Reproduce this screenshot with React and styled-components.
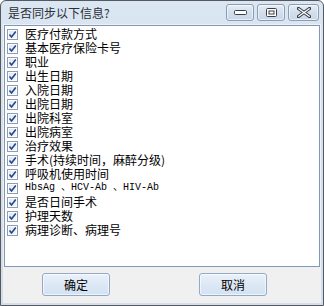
import React from 'react'
import styled, { createGlobalStyle } from 'styled-components'

const items = [
  '医疗付款方式',
  '基本医疗保险卡号',
  '职业',
  '出生日期',
  '入院日期',
  '出院日期',
  '出院科室',
  '出院病室',
  '治疗效果',
  '手术(持续时间，麻醉分级)',
  '呼吸机使用时间',
  'HbsAg 、HCV-Ab 、HIV-Ab',
  '是否日间手术',
  '护理天数',
  '病理诊断、病理号',
]

const App = () => {
  return (
    <>
      <GlobalStyle />
      <Window>
        <TitleBar>
          <Title>是否同步以下信息?</Title>
          <Controls>
            <CtrlBtn>
              <svg width="13" height="6" viewBox="0 0 13 6">
                <rect x="0.5" y="0.5" width="12" height="4" rx="1" fill="#fff" stroke="#3a3f47" />
              </svg>
            </CtrlBtn>
            <CtrlBtn>
              <svg width="11" height="9" viewBox="0 0 11 9">
                <rect x="0.5" y="0.5" width="10" height="8" rx="1" fill="#fff" stroke="#3a3f47" />
                <rect x="3" y="3" width="5" height="3" fill="none" stroke="#3a3f47" />
              </svg>
            </CtrlBtn>
            <CtrlBtn $wide>
              <svg width="14" height="11" viewBox="0 0 14 11">
                <path d="M1.5 1.5 L12.5 9.5 M12.5 1.5 L1.5 9.5" stroke="#3a3f47" strokeWidth="3.4" strokeLinecap="round" />
                <path d="M1.8 1.7 L12.2 9.3 M12.2 1.7 L1.8 9.3" stroke="#fff" strokeWidth="1.3" strokeLinecap="round" />
              </svg>
            </CtrlBtn>
          </Controls>
        </TitleBar>
        <Client>
          <List>
            {items.map((t) => (
              <Row key={t}>
                <Check>
                  <svg width="9" height="9" viewBox="0 0 9 9">
                    <path d="M1.5 4.5 L3.5 7 L7.8 1.5" fill="none" stroke="#21488f" strokeWidth="1.6" />
                  </svg>
                </Check>
                <Label $mono={/^[A-Za-z]/.test(t)}>{t}</Label>
              </Row>
            ))}
          </List>
          <ButtonRow>
            <Button>确定</Button>
            <Button>取消</Button>
          </ButtonRow>
        </Client>
      </Window>
    </>
  )
}

export default App

const GlobalStyle = createGlobalStyle`
  body {
    margin: 0;
    background: #fff;
    font-family: "Noto Sans CJK SC", "Liberation Sans", sans-serif;
  }
`

const Window = styled.div`
  width: 324px;
  height: 306px;
  box-sizing: border-box;
  border: 1px solid #55595f;
  border-radius: 6px 6px 0 0;
  background: linear-gradient(#dbe6f3, #d5e0ed 40%, #d3deea);
  padding: 0 2px 2px 2px;
  display: flex;
  flex-direction: column;
`

const TitleBar = styled.div`
  height: 23px;
  display: flex;
  align-items: flex-start;
  justify-content: space-between;
`

const Title = styled.div`
  font-size: 12px;
  line-height: 14px;
  height: 14px;
  color: #2b2f36;
  margin: 5px 0 0 5px;
`

const Controls = styled.div`
  display: flex;
  gap: 3px;
  padding-top: 3px;
  margin-right: 2px;
`

const CtrlBtn = styled.div`
  width: ${(p) => (p.$wide ? 31 : 28)}px;
  height: 17px;
  box-sizing: border-box;
  border: 1px solid #8c9db3;
  border-radius: 3px;
  background: linear-gradient(#e6eef8, #d2deec 50%, #c9d7e8);
  box-shadow: inset 0 0 0 1px rgba(255, 255, 255, 0.55);
  display: flex;
  align-items: center;
  justify-content: center;
`

const Client = styled.div`
  flex: 1;
  background: #f0f0f0;
  padding: 1px 1px 0 1px;
  display: flex;
  flex-direction: column;
`

const List = styled.div`
  height: 242px;
  box-sizing: border-box;
  border: 1px solid #8198b8;
  background: #fff;
  padding: 1px 0 0 2px;
`

const Row = styled.div`
  height: 14px;
  display: flex;
  align-items: center;
`

const Check = styled.div`
  width: 11px;
  height: 11px;
  box-sizing: border-box;
  border: 1px solid #8e9db4;
  background: linear-gradient(135deg, #dfe5ee, #f6f8fb);
  box-shadow: inset 0 0 0 1px #fff;
  display: flex;
  align-items: center;
  justify-content: center;
  margin-right: 7px;
`

const Label = styled.div`
  height: 14px;
  line-height: 14px;
  font-size: ${(p) => (p.$mono ? 10 : 12)}px;
  color: #000;
  white-space: pre;
  overflow: visible;
  font-family: ${(p) =>
    p.$mono ? '"Liberation Mono", "Noto Sans CJK SC", monospace' : '"Noto Sans CJK SC", sans-serif'};
`

const ButtonRow = styled.div`
  display: flex;
  gap: 89px;
  padding: 6px 0 0 38px;
`

const Button = styled.div`
  width: 68px;
  height: 23px;
  box-sizing: border-box;
  border: 1px solid #93a9c8;
  border-radius: 3px;
  background: linear-gradient(#eaf1fa, #dde8f5 50%, #d3e1f1);
  box-shadow: inset 0 0 0 1px rgba(255, 255, 255, 0.6);
  display: flex;
  align-items: center;
  justify-content: center;
  font-size: 12px;
  color: #000;
`
